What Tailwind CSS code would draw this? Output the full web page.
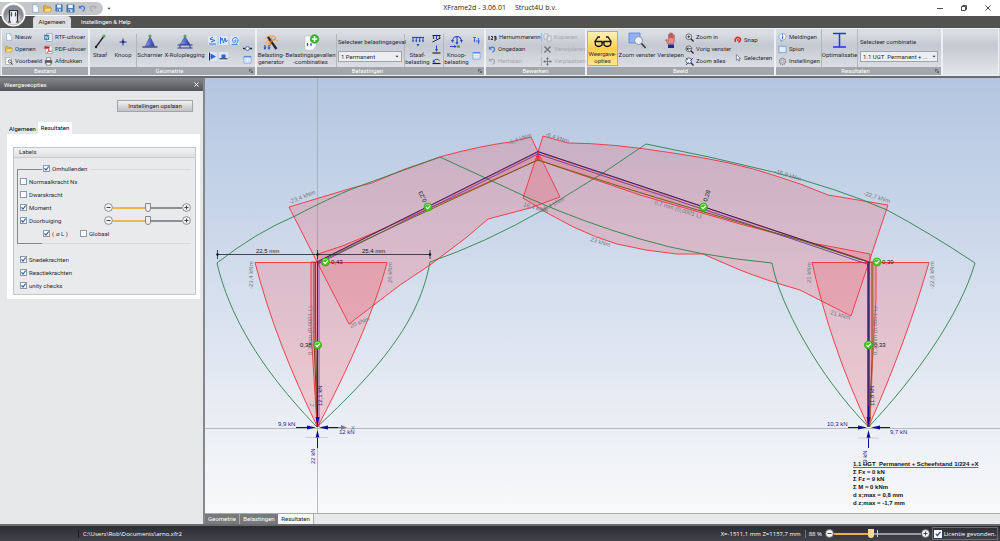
<!DOCTYPE html>
<html lang="nl">
<head>
    <meta charset="UTF-8">
    <meta name="viewport" content="width=device-width, initial-scale=1.0">
    <title>XFrame2d - 3.06.01</title>
    <script src="https://cdn.jsdelivr.net/npm/@tailwindcss/browser@4"></script>
</head>
<body class="flex flex-col h-screen overflow-hidden bg-[#5a5a5c] font-['Roboto','Noto_Sans',sans-serif] text-[6px] leading-[8px] text-[#2c2c34]">

    <!-- shared icons -->
    <svg class="hidden">
        <symbol id="page" viewBox="0 0 10 10"><path d="M2 .7h4.500l2 2v6.600H2z" fill="#fbfdff" stroke="#7a9cc8" stroke-width=".7"/><path d="M6.500.7v2h2" fill="#cfe0f4" stroke="#7a9cc8" stroke-width=".6"/></symbol>
        <symbol id="folder" viewBox="0 0 10 10"><path d="M.6 8.800V2h3l1 1.200h3.600V5" fill="#e8b93c" stroke="#b07f17" stroke-width=".6"/><path d="M.8 8.900L2.600 4.600h7L8 8.900z" fill="#ffdf7c" stroke="#b98a1c" stroke-width=".6"/></symbol>
        <symbol id="disk" viewBox="0 0 10 10"><path d="M1 1h8v8H1z" fill="#3f7fca" stroke="#23558f" stroke-width=".6"/><path d="M2.500 1h5v3.500h-5z" fill="#eef5fc"/><path d="M2.800 6h4.400v3H2.800z" fill="#c8dbe9"/><path d="M3.500 6.600h1.200v2H3.500z" fill="#2b4f78"/></symbol>
        <symbol id="undo" viewBox="0 0 10 10"><path d="M2.500 4.200C5 1.500 9 3 8 6.500 7.700 7.700 6.700 8.500 5.500 9" fill="none" stroke="currentColor" stroke-width="1.500"/><path d="M1 1.500v4.200h4.200z" fill="currentColor"/></symbol>
        <symbol id="grid" viewBox="0 0 10 10"><path d="M1 1.500h8v7.500H1z" fill="#f2f7fd" stroke="#6b9bd6" stroke-width=".8"/><path d="M1 2h8" stroke="#4f8ad6" stroke-width="1.600"/><path d="M3.700 3v6M6.400 3v6M1 5h8M1 7h8" stroke="#b9d1ee" stroke-width=".5"/></symbol>
        <symbol id="lens" viewBox="0 0 10 10"><circle cx="4.200" cy="4.200" r="3.200" fill="#eef4fb" stroke="#3a3f4c" stroke-width=".8"/><path d="M6.500 6.500l3 3" stroke="#2b2f3a" stroke-width="1.500"/></symbol>
        <symbol id="arrow" viewBox="0 0 4 3"><path d="M.5.7h3L2 2.500z" fill="#333"/></symbol>
        <symbol id="corner" viewBox="0 0 6 6"><path d="M.5 4.500v-4h4M2 2l3 3M5.300 2.600v2.700H2.600" fill="none" stroke="#333" stroke-width=".8"/></symbol>
        <symbol id="tick" viewBox="0 0 7 7"><path d="M1.500 3.300L3 5l2.700-3.500" fill="none" stroke="#2a5db0" stroke-width="1.200"/></symbol>
        <symbol id="minus" viewBox="0 0 9 9"><circle cx="4.500" cy="4.500" r="3.900" fill="#f4f4f5" stroke="#666" stroke-width=".7"/><path d="M2.500 4.500h4" stroke="#444" stroke-width="1"/></symbol>
        <symbol id="plus" viewBox="0 0 9 9"><circle cx="4.500" cy="4.500" r="3.900" fill="#f4f4f5" stroke="#666" stroke-width=".7"/><path d="M2.500 4.500h4M4.500 2.500v4" stroke="#444" stroke-width="1"/></symbol>
        <symbol id="ok" viewBox="0 0 10 10"><circle cx="5" cy="5" r="4.600" fill="#3fc51f" stroke="#2c9a14" stroke-width=".6"/><path d="M2 3.500a3.600 3.600 0 0 1 6 0" fill="none" stroke="#a5ec8c" stroke-width="1"/><path d="M2.800 5l1.800 1.900 2.900-3.300" fill="none" stroke="#fff" stroke-width="1.300"/></symbol>
    </svg>

    <!-- title bar -->
    <header class="relative flex h-4 shrink-0 items-center bg-white">
        <div class="flex h-[13px] items-center gap-[3px] rounded-r-full bg-[#c6c7ca] pl-[31px] pr-[6px]">
            <button aria-label="Nieuw"><svg class="size-[9px]"><use href="#page"/></svg></button>
            <button aria-label="Openen"><svg class="size-[9px]"><use href="#folder"/></svg></button>
            <button aria-label="Opslaan"><svg class="size-[8px]"><use href="#disk"/></svg></button>
            <button aria-label="Opslaan als"><svg class="size-[9px]"><use href="#disk"/></svg></button>
            <button aria-label="Ongedaan" class="text-[#3f78d8]"><svg class="size-[8px]"><use href="#undo"/></svg></button>
            <button aria-label="Herhalen" class="text-[#a9abb0]"><svg class="size-[8px] -scale-x-100"><use href="#undo"/></svg></button>
        </div>
        <button aria-label="Werkbalk aanpassen" class="ml-1"><svg class="h-[3px] w-1"><use href="#arrow"/></svg></button>
        <h1 class="absolute inset-x-0 text-center font-['Open_Sans',sans-serif] text-[7px] leading-4 whitespace-pre text-[#222]">XFrame2d - 3.06.01     Struct4U b.v.</h1>
        <div class="relative ml-auto flex items-center gap-[18px] pr-[9px]">
            <button aria-label="Minimaliseren"><svg class="size-[6px]" viewBox="0 0 6 6"><path d="M0 3.500h6" stroke="#222" stroke-width=".8"/></svg></button>
            <button aria-label="Herstellen"><svg class="size-[6px]" viewBox="0 0 6 6"><path d="M.5 1.500h4v4h-4zM1.700 1.300V.5h3.800v3.800h-.8" fill="none" stroke="#222" stroke-width=".8"/></svg></button>
            <button aria-label="Sluiten"><svg class="size-[6px]" viewBox="0 0 6 6"><path d="M.5.5l5 5M5.500.5l-5 5" stroke="#222" stroke-width=".8"/></svg></button>
        </div>
        <button aria-label="Programmamenu" class="absolute top-[2px] left-[1px] z-10">
            <svg class="size-[25px]" viewBox="0 0 25 25"><defs><radialGradient id="orb" cx=".5" cy=".8"><stop offset="0" stop-color="#fff"/><stop offset=".6" stop-color="#c4c6ca"/><stop offset="1" stop-color="#8b8d93"/></radialGradient></defs><circle cx="12.500" cy="12.500" r="12" fill="#fff"/><circle cx="12.500" cy="13" r="10" fill="url(#orb)" stroke="#a0a2a7" stroke-width=".6"/><path d="M8.500 19.500V8.500h8v11" fill="#edf0f5" stroke="#28282e" stroke-width="1.200"/><path d="M10.500 10v3M14.500 10v3" stroke="#3348c0" stroke-width="1"/><path d="M9.500 12.500l1 2.500 1-2.500zM13.500 12.500l1 2.500 1-2.500z" fill="#3348c0"/><path d="M7 20h3M15 20h3" stroke="#222" stroke-width="1.100"/></svg>
        </button>
    </header>

    <nav class="flex h-3 shrink-0 items-end bg-[#525253] pl-[33px]">
        <button class="h-3 w-[38px] rounded-t-sm bg-[#dcdee2] text-[#222]">Algemeen</button>
        <button class="ml-[10px] h-3 text-white">Instellingen &amp; Help</button>
    </nav>

    <!-- ribbon -->
    <div class="flex h-[48px] shrink-0 gap-[2px] bg-[#d5d7dc] px-[2px] pt-[1px] pb-[1px] *:flex *:flex-col *:bg-linear-to-b *:from-[#d9dce2] *:from-10% *:via-[#c4c9d2] *:via-35% *:to-[#e3e6ea] *:shadow-[0_0_0_1px_#eff0f2]">

        <section class="w-[86px]">
            <div class="grid flex-1 grid-cols-[39px_1fr] items-center pt-[2px] pl-[3px]">
                <button class="flex items-center gap-[2px]"><svg class="size-[8px]"><use href="#page"/></svg>Nieuw</button>
                <button class="flex items-center gap-[2px]"><svg class="size-[9px]" viewBox="0 0 10 10"><path d="M3 .6h6v8.800H3z" fill="#fff" stroke="#5a84bd" stroke-width=".6"/><path d="M5 3h3M5 5h3M5 7h3" stroke="#89a7d0" stroke-width=".6"/><path d="M.3 2h5.400v5.500H.3z" fill="#2e66b5"/><path d="M1.200 3.300l.9 3 .9-2.700.9 2.700.9-3" fill="none" stroke="#fff" stroke-width=".7"/></svg>RTF-uitvoer</button>
                <button class="flex items-center gap-[2px]"><svg class="size-[8px]"><use href="#folder"/></svg>Openen</button>
                <button class="flex items-center gap-[2px]"><svg class="size-[9px]" viewBox="0 0 10 10"><path d="M2 .5h5l2 2v7H2z" fill="#fff" stroke="#888" stroke-width=".6"/><path d="M.4 1.500h5.800v2.600H.4z" fill="#c82020"/><path d="M3.500 8.500C5.500 6 5.500 5 5 4.500c-.6 1.500 1.500 2.800 3.300 2.700C6.500 6.500 5 7.400 3.500 8.500z" fill="none" stroke="#d02828" stroke-width=".8"/></svg>PDF-uitvoer</button>
                <button class="flex items-center gap-[2px]"><svg class="size-[8px]" viewBox="0 0 10 10"><path d="M1 .5h5l2 2v7H1z" fill="#fff" stroke="#777" stroke-width=".6"/><circle cx="6" cy="5.500" r="2" fill="#dfeaf5" stroke="#333" stroke-width=".8"/><path d="M7.300 7L9.500 9.400" stroke="#222" stroke-width="1.200"/></svg>Voorbeeld</button>
                <button class="flex items-center gap-[2px]"><svg class="size-[9px]" viewBox="0 0 10 10"><path d="M2.800.8h4.400v3H2.800z" fill="#fff" stroke="#555" stroke-width=".6"/><path d="M1 3.600h8v3.600H1z" fill="#55585f"/><path d="M2.500 6h5v3h-5z" fill="#fff" stroke="#444" stroke-width=".6"/></svg>Afdrukken</button>
            </div>
            <h2 class="h-[8px] bg-[#a3a6aa] text-center leading-[8px] text-white">Bestand</h2>
        </section>

        <section class="w-[165px]">
            <div class="flex flex-1 pt-[5px]">
                <button class="flex w-5 flex-col items-center gap-[2px]"><svg class="h-[15px] w-3" viewBox="0 0 12 15"><path d="M2 13L10 2" stroke="#222" stroke-width="1.300"/><circle cx="2" cy="13" r="1.200" fill="#222"/><circle cx="10" cy="2" r="1.500" fill="#4fa64f"/></svg>Staaf</button>
                <button class="flex w-[26px] flex-col items-center gap-[2px]"><svg class="h-[15px] w-3" viewBox="0 0 12 15"><path d="M6 4.500v7M2.500 8h7" stroke="#3434b4" stroke-width="1"/><circle cx="6" cy="8" r="1.400" fill="#28287e"/></svg>Knoop</button>
                <button class="flex w-[27px] flex-col items-center gap-[2px] border-l border-[#b1b5bc]"><svg class="h-[15px] w-[18px]" viewBox="0 0 18 15"><defs><linearGradient id="tri"><stop offset="0" stop-color="#8fa4f0"/><stop offset="1" stop-color="#2634a0"/></linearGradient></defs><path d="M9 2.500L13.500 12h-9z" fill="url(#tri)" stroke="#2b349a" stroke-width=".5"/><path d="M1.500 13h15" stroke="#2b2b68" stroke-width="1.200"/><circle cx="9" cy="2" r="1.600" fill="#57a857"/></svg>Scharnier</button>
                <button class="flex w-[43px] flex-col items-center gap-[2px]"><svg class="h-[15px] w-[18px]" viewBox="0 0 18 15"><path d="M9 2.500L14 10.500H4z" fill="url(#tri)" stroke="#2b349a" stroke-width=".5"/><path d="M1.500 11h15M1.500 14h15M4 11v3M14 11v3" stroke="#2b3494" stroke-width="1"/><circle cx="9" cy="2" r="1.600" fill="#57a857"/></svg>X-Roloplegging</button>
                <div class="grid grid-cols-3 content-start gap-x-[2px] gap-y-[7px] pt-[2px] pl-[2px]">
                    <button aria-label="Veer x" class="bg-[#dce6f5]"><svg class="size-[9px]" viewBox="0 0 9 9"><path d="M5 1L2 3l5 1.500L3 6M1 8h7" fill="none" stroke="#2a6be0" stroke-width="1"/></svg></button>
                    <button aria-label="Veer z" class="bg-[#dce6f5]"><svg class="size-[9px]" viewBox="0 0 9 9"><path d="M1.500 1v7M1.500 5L3 2l1.500 5L6 2l1 4 1.500-2" fill="none" stroke="#2a6be0" stroke-width=".9"/></svg></button>
                    <button aria-label="Rotatieveer" class="bg-[#dce6f5]"><svg class="size-[9px]" viewBox="0 0 9 9"><path d="M4.500 4.500c1-1.500 2 .2 1 1.300s-3 .5-3-1.600 2.800-3.600 4.500-2 1 4-.5 5.300M1.500 8.300h6" fill="none" stroke="#2a6be0" stroke-width=".9"/></svg></button>
                    <button aria-label="Inklemming" class="bg-[#dce6f5]"><svg class="size-[9px]" viewBox="0 0 9 9"><path d="M1.500.5v8" stroke="#222"/><path d="M2.500 1.500L8 4.500 2.500 7.500z" fill="#2563d8"/></svg></button>
                    <button aria-label="Oplegging" class="bg-[#dce6f5]"><svg class="size-[9px]" viewBox="0 0 9 9"><path d="M2.500 2.500h4v3.500h-4z" fill="#2563d8"/><path d="M.5 6.800h8" stroke="#222"/></svg></button>
                </div>
                <div class="ml-auto flex flex-col justify-end gap-[2px] pr-[3px] pb-[3px]">
                    <button aria-label="Staafscharnier"><svg class="size-[9px]" viewBox="0 0 9 9"><path d="M0 4.500h2.500M6.500 4.500H9" stroke="#222" stroke-width="1.300"/><circle cx="4.500" cy="4.500" r="2" fill="#eef" stroke="#3f5fd6" stroke-width=".9"/></svg></button>
                    <button aria-label="Geometrietabel"><svg class="size-[9px]"><use href="#grid"/></svg></button>
                </div>
            </div>
            <h2 class="flex h-[8px] items-center bg-[#a3a6aa] leading-[8px] text-white"><span class="flex-1 text-center">Geometrie</span><svg class="mr-[2px] size-1"><use href="#corner"/></svg></h2>
        </section>

        <section class="w-[227px]">
            <div class="flex flex-1 pt-[5px] leading-[7px]">
                <button class="flex w-[28px] flex-col items-center"><svg class="h-[17px] w-[18px]" viewBox="0 0 18 17"><path d="M3 5c3-4 9-4 11-1M4 9c1-3 8-5 12-2" fill="none" stroke="#f0a44e" stroke-width="1.100"/><path d="M6 3l8.500 12" stroke="#2c2521" stroke-width="2.200"/><path d="M10 3l-2 9M14 4l-8 6" stroke="#e48025" stroke-width=".9"/><path d="M3 11v3M7 11v3" stroke="#2d46c0" stroke-width="1.200"/><path d="M1.500 13.500L3 16l1.500-2.500zM5.500 13.500L7 16l1.500-2.500z" fill="#2d46c0"/></svg><span>Belasting-<br>generator</span></button>
                <button class="flex w-[51px] flex-col items-center"><svg class="h-[17px] w-[18px]" viewBox="0 0 18 17"><path d="M3 2h11v10l-3 4H3z" fill="#fafbfd" stroke="#b9bfc9" stroke-width=".6"/><path d="M5.500 9v2M9 9v2" stroke="#2d46c0"/><path d="M4.500 10.500l1 2 1-2zM8 10.500l1 2 1-2z" fill="#2d46c0"/><circle cx="12.500" cy="5" r="4.300" fill="#35b529" stroke="#1c8a17" stroke-width=".5"/><path d="M12.500 2.300v5.400M9.800 5h5.400" stroke="#fff" stroke-width="1.600"/></svg><span>Belastingsgevallen<br>-combinaties</span></button>
                <div class="flex w-[69px] flex-col gap-[6px] border-x border-[#b1b5bc] pt-[4px] pl-px">
                    <label for="geval" class="whitespace-nowrap">Selecteer belastingsgeval</label>
                    <div class="grid items-center">
                        <select id="geval" class="col-start-1 row-start-1 h-[11px] w-[64px] appearance-none border border-[#a0a4ab] bg-[#eceef1] pl-[2px] text-[6px] leading-[8px]"><option>1 Permanent</option></select>
                        <svg class="pointer-events-none col-start-1 row-start-1 ml-[57px] h-[3px] w-1"><use href="#arrow"/></svg>
                    </div>
                </div>
                <button class="flex w-[25px] flex-col items-center"><svg class="h-[17px] w-[14px]" viewBox="0 0 14 17"><path d="M1 3.500h12" stroke="#2d46c0" stroke-width="1.200"/><path d="M2 4v3M5.300 4v3M8.700 4v3M12 4v3" stroke="#2d46c0" stroke-width="1"/><path d="M.8 6.500L2 8.500l1.200-2zM4 6.500l1.300 2 1.200-2zM7.500 6.500l1.200 2 1.200-2zM10.800 6.500l1.200 2 1.200-2zM5.500 10h3L7 12.500z" fill="#2d46c0"/></svg><span>Staaf-<br>belasting</span></button>
                <div class="flex w-[14px] flex-col items-center gap-[2px] border-r border-[#b1b5bc]">
                    <button aria-label="Schuine last"><svg class="size-[9px]" viewBox="0 0 9 9"><path d="M.5 1.500h8M.5 8l8-4" stroke="#222" stroke-width="1"/><path d="M1.500 2v3M4.500 2v3M7.500 2v2" stroke="#2d46c0" stroke-width="1.200"/></svg></button>
                    <button aria-label="Puntlast"><svg class="size-[9px]" viewBox="0 0 9 9"><path d="M.5 8h8" stroke="#222" stroke-width="1.200"/><path d="M4.500.5v4" stroke="#2d46c0"/><path d="M3 4l1.500 3L6 4z" fill="#2d46c0"/></svg></button>
                    <button aria-label="Momentlast"><svg class="size-[9px]" viewBox="0 0 9 9"><path d="M.5 7.500h8" stroke="#222" stroke-width="1.200"/><path d="M2 5a3 3 0 0 1 5.500 0" fill="none" stroke="#2d46c0" stroke-width="1"/><path d="M.8 3.500v3h3z" fill="#2d46c0"/></svg></button>
                </div>
                <button class="flex w-[25px] flex-col items-center"><svg class="h-[17px] w-[16px]" viewBox="0 0 16 17"><path d="M3.500 7a4.500 4.500 0 0 1 9 0M8 3v6M1 12.500h5" fill="none" stroke="#2d46c0" stroke-width="1.100"/><path d="M2 6h3L3.500 9zM11 6h3l-1.500 3zM6.500 8h3L8 11zM5 11l3 1.500L5 14z" fill="#2d46c0"/><circle cx="9.500" cy="12.500" r="1.500" fill="#43a843"/></svg><span>Knoop-<br>belasting</span></button>
                <div class="flex flex-1 flex-col items-center gap-[6px] pt-[2px]">
                    <button aria-label="Knooplasten"><svg class="size-[9px]" viewBox="0 0 9 9"><path d="M1 1.500h3M2.500 1.500v4M4 5h4M6.500 2v5" stroke="#2d6bc0" stroke-width=".9"/><path d="M1.500 4.500h2l-1 2zM5.500 6h2l-1 2.500z" fill="#2d6bc0"/></svg></button>
                    <button aria-label="Lastentabel"><svg class="size-[9px]"><use href="#grid"/></svg></button>
                </div>
            </div>
            <h2 class="flex h-[8px] items-center bg-[#a3a6aa] leading-[8px] text-white"><span class="flex-1 text-center">Belastingen</span><svg class="mr-[2px] size-1"><use href="#corner"/></svg></h2>
        </section>

        <section class="w-[99px]">
            <div class="grid flex-1 grid-cols-[53px_1fr] items-center pt-[2px] pl-[2px]">
                <button class="flex items-center gap-[2px] whitespace-nowrap"><svg class="size-[9px]" viewBox="0 0 9 9"><path d="M1 3v4M3 3.500h1.500v1.500L3 6.500h2M6 3.500h2V5H6.500 8v2H6" fill="none" stroke="#222" stroke-width=".9"/></svg>Hernummerenn</button>
                <button disabled class="flex items-center gap-[2px] border-l border-[#b1b5bc] pl-px text-[#a6a9ae]"><svg class="size-[9px]" viewBox="0 0 9 9"><path d="M1 1h4v5H1zM4 3h4v5H4z" fill="#e7e9ec" stroke="currentColor" stroke-width=".7"/></svg>Kopieren</button>
                <button class="flex items-center gap-[2px]"><svg class="size-[8px] text-[#3f78d8]"><use href="#undo"/></svg>Ongedaan</button>
                <button disabled class="flex items-center gap-[2px] border-l border-[#b1b5bc] pl-px text-[#a6a9ae]"><svg class="size-[9px] text-[#6f7378]" viewBox="0 0 9 9"><path d="M1.500 1.500l6 6M7.500 1.500l-6 6" stroke="currentColor" stroke-width="1.400"/></svg>Verwijderen</button>
                <button disabled class="flex items-center gap-[2px] text-[#a6a9ae]"><svg class="size-[8px]"><use href="#undo"/></svg>Herhalen</button>
                <button disabled class="flex items-center gap-[2px] border-l border-[#b1b5bc] pl-px text-[#a6a9ae]"><svg class="size-[9px] text-[#6f7378]" viewBox="0 0 9 9"><path d="M4.500 1v7M1 4.500h7" stroke="currentColor" stroke-width=".8"/><path d="M3 2.300L4.500 0 6 2.300zM3 6.700L4.500 9 6 6.700zM2.300 3L0 4.500 2.300 6zM6.700 3L9 4.500 6.700 6z" fill="currentColor"/></svg>Verplaatsen</button>
            </div>
            <h2 class="h-[8px] bg-[#a3a6aa] text-center leading-[8px] text-white">Bewerken</h2>
        </section>

        <section class="w-[187px]">
            <div class="flex flex-1">
                <button class="mt-[2px] mb-px flex w-[31px] flex-col items-center border border-[#d9ab3d] bg-linear-to-b from-[#fff0b8] via-[#ffcf4b] to-[#ffe88e] leading-[7px]"><svg class="h-[18px] w-[18px]" viewBox="0 0 18 18"><path d="M1 9.500h7v3.500q-3.500 3-6.500 0zM10 9.500h7l-.5 3.500q-3.500 3-6.500 0zM8 10.500h2M1 9.500L4 5h2M17 9.500L14 5h-2" fill="none" stroke="#141414" stroke-width="1.300"/></svg><span>Weergave-<br>opties</span></button>
                <button class="flex w-[38px] flex-col items-center gap-[2px] whitespace-nowrap pt-[2px]"><svg class="h-[18px] w-[18px]" viewBox="0 0 18 18"><path d="M1 2h11v10H1z" fill="#8fb3f5" stroke="#5a84d6" stroke-width=".8"/><circle cx="10.500" cy="9.500" r="4" fill="#e6effb" stroke="#8b919c" stroke-width="1"/><path d="M13.500 12.500l4 4.500" stroke="#3c4049" stroke-width="1.800"/></svg>Zoom venster</button>
                <button class="flex w-[29px] flex-col items-center gap-[2px] pt-[2px]"><svg class="h-[18px] w-[14px]" viewBox="0 0 14 18"><path d="M4 13L1.500 9l1-.7L4.500 10V3.500h1.300V7 2h1.500v5-4.500h1.500V7.500 4h1.500v6l-1 3z" fill="#e58e86" stroke="#a34741" stroke-width=".6"/><path d="M4 13.500h6V17H4z" fill="#1d2b90"/></svg>Verslepen</button>
                <div class="flex w-[49px] flex-col justify-around pt-[2px]">
                    <button class="flex items-center gap-[2px]"><svg class="size-[9px]" viewBox="0 0 10 10"><use href="#lens"/><path d="M2.500 4.200h3.400M4.200 2.500v3.400" stroke="#222" stroke-width=".9"/></svg>Zoom in</button>
                    <button class="flex items-center gap-[2px] whitespace-nowrap"><svg class="size-[9px]" viewBox="0 0 10 10"><use href="#lens"/><path d="M2 4.200h5M4 2.500L2 4.200 4 6" fill="none" stroke="#222" stroke-width=".9"/></svg>Vorig venster</button>
                    <button class="flex items-center gap-[2px]"><svg class="size-[9px]" viewBox="0 0 10 10"><use href="#lens"/><path d="M1 9l3-3M9 1L6 4M1 1l2 2" stroke="#2558a8" stroke-width="1.100"/></svg>Zoom alles</button>
                </div>
                <div class="flex flex-1 flex-col justify-around pt-[2px]">
                    <button class="flex items-center gap-[2px]"><svg class="size-[8px]" viewBox="0 0 10 10"><path d="M2 7.500C0 3 4 .5 7 2.500c2 1.500 1 4.500-1.500 5.500" fill="none" stroke="#d42f2b" stroke-width="2"/><circle cx="4.800" cy="5" r="1.300" fill="#d42f2b"/></svg>Snap</button>
                    <button class="flex items-center gap-[2px]"><svg class="size-[8px]" viewBox="0 0 10 10"><path d="M3 .8v7l1.800-1.600L6 9l1.200-.5L6 5.800h2.300z" fill="#fff" stroke="#555c70" stroke-width=".8"/></svg>Selecteren</button>
                </div>
            </div>
            <h2 class="h-[8px] bg-[#a3a6aa] text-center leading-[8px] text-white">Beeld</h2>
        </section>

        <section class="w-[165px]">
            <div class="flex flex-1">
                <div class="flex w-[46px] flex-col justify-around border-r border-[#b1b5bc] pt-[2px] pl-[2px]">
                    <button class="flex items-center gap-[2px]"><svg class="size-[9px]" viewBox="0 0 10 10"><path d="M5 .6a4 3.600 0 1 1-1 7.100L3.500 9.500 2.500 7A4 3.600 0 0 1 5 .6z" fill="#f4f8ff" stroke="#5d92d6" stroke-width=".8"/><path d="M5 1.800v1M5 3.500v3" stroke="#1d52b8" stroke-width="1.300"/></svg>Meldingen</button>
                    <button class="flex items-center gap-[2px]"><svg class="size-[9px]" viewBox="0 0 10 10"><path d="M1 1.500h8v7H1z" fill="#e3edfa" stroke="#6b9bd6" stroke-width=".9"/></svg>Spion</button>
                    <button class="flex items-center gap-[2px]"><svg class="size-[9px]" viewBox="0 0 10 10"><circle cx="5" cy="5" r="3.500" fill="#c4c7cc" stroke="#85888e" stroke-width="1.300" stroke-dasharray="1.500 .8"/><circle cx="5" cy="5" r="1.300" fill="#eceef1" stroke="#85888e" stroke-width=".6"/></svg>Instellingen</button>
                </div>
                <button class="flex w-[36px] flex-col items-center gap-[2px] border-r border-[#b1b5bc] pt-[2px]"><svg class="h-[18px] w-[15px]" viewBox="0 0 15 18"><path d="M1 2.500h13M1 16h13M7.500 2.500V16" stroke="#2338dc" stroke-width="1.500"/></svg>Optimalisatie</button>
                <div class="flex flex-col gap-[6px] pt-[9px] pl-[2px] leading-[7px]">
                    <label for="combi" class="whitespace-nowrap">Selecteer combinatie</label>
                    <div class="grid items-center">
                        <select id="combi" class="col-start-1 row-start-1 h-[11px] w-[78px] appearance-none border border-[#a0a4ab] bg-[#eceef1] pl-[2px] text-[6px] leading-[8px]"><option>1.1 UGT&nbsp; Permanent + ...</option></select>
                        <svg class="pointer-events-none col-start-1 row-start-1 ml-[72px] h-[3px] w-1"><use href="#arrow"/></svg>
                    </div>
                </div>
            </div>
            <h2 class="flex h-[8px] items-center bg-[#a3a6aa] leading-[8px] text-white"><span class="flex-1 text-center">Resultaten</span><svg class="mr-[2px] size-1"><use href="#corner"/></svg></h2>
        </section>

        <div class="flex-1"></div>
    </div>

    <!-- work area -->
    <main class="flex min-h-0 flex-1 gap-[2px] border-y-2 border-[#6a6b6e] bg-[#85878b]">

        <aside class="w-[203px] shrink-0 bg-[#e6e7e8]">
            <div class="flex h-[13px] items-center justify-between bg-linear-to-b from-[#85868a] to-[#55565a] px-1 text-white">
                <h2>Weergaveopties</h2>
                <button aria-label="Paneel sluiten"><svg class="size-[5px]" viewBox="0 0 5 5"><path d="M.5.5l4 4M4.500.5l-4 4" stroke="#fff"/></svg></button>
            </div>
            <div class="flex justify-end pt-[9px] pr-[10px]">
                <button class="h-3 w-[76px] border border-[#a2a4a8] bg-linear-to-b from-[#f5f5f6] via-[#d6d8db] to-[#c0c2c6] text-[#222]">Instellingen opslaan</button>
            </div>
            <div class="mt-[10px] flex items-end pl-[7px] text-black">
                <button class="h-[11px] w-[31px]">Algemeen</button>
                <button class="h-[12px] w-[34px] bg-white">Resultaten</button>
            </div>
            <div class="mr-[3px] ml-[7px] bg-white pt-[13px] pr-1 pb-1 pl-[6px]">
                <section class="border border-[#c3c5c8] bg-[#e9eaeb] pr-1 pb-[2px] pl-[3px]">
                    <h3 class="-mr-1 -ml-[3px] h-[10px] border-b border-[#c9cbce] bg-linear-to-b from-[#f2f3f4] to-[#dfe0e2] pl-[5px]">Labels</h3>
                    <div class="grid grid-cols-[25px_1fr] grid-rows-[10px_75px_3px]">
                        <div class="col-start-1 row-start-2 mt-px -mb-px border-y border-l border-[#85878b]"></div>
                        <div class="col-start-2 row-start-2 mt-px -mb-px border-y border-[#d6d8da]"></div>
                        <div class="z-10 col-span-2 col-start-1 row-span-3 row-start-1 flex flex-col pt-[4px] *:h-[13px]">
                            <div class="flex items-center pl-[25px]">
                                <label class="flex items-center gap-[2px] bg-[#e9eaeb] pr-1 pl-px"><span class="grid"><input type="checkbox" checked class="peer col-start-1 row-start-1 size-[7px] appearance-none border border-[#8e97a5] bg-white"><svg class="pointer-events-none col-start-1 row-start-1 hidden size-[7px] peer-checked:block"><use href="#tick"/></svg></span>Omhullenden</label>
                            </div>
                            <div class="flex items-center pl-[3px]">
                                <label class="flex items-center gap-[2px]"><span class="grid"><input type="checkbox" class="peer col-start-1 row-start-1 size-[7px] appearance-none border border-[#8e97a5] bg-white"><svg class="pointer-events-none col-start-1 row-start-1 hidden size-[7px] peer-checked:block"><use href="#tick"/></svg></span>Normaalkracht Nx</label>
                            </div>
                            <div class="flex items-center pl-[3px]">
                                <label class="flex items-center gap-[2px]"><span class="grid"><input type="checkbox" class="peer col-start-1 row-start-1 size-[7px] appearance-none border border-[#8e97a5] bg-white"><svg class="pointer-events-none col-start-1 row-start-1 hidden size-[7px] peer-checked:block"><use href="#tick"/></svg></span>Dwarskracht</label>
                            </div>
                            <div class="flex items-center justify-between pl-[3px]">
                                <label class="flex items-center gap-[2px]"><span class="grid"><input type="checkbox" checked class="peer col-start-1 row-start-1 size-[7px] appearance-none border border-[#8e97a5] bg-white"><svg class="pointer-events-none col-start-1 row-start-1 hidden size-[7px] peer-checked:block"><use href="#tick"/></svg></span>Moment</label>
                                <div class="flex items-center">
                                    <button aria-label="Moment kleiner"><svg class="size-[9px]"><use href="#minus"/></svg></button>
                                    <input type="range" aria-label="Schaal moment" value="50" class="h-[9px] w-[69px] appearance-none bg-[linear-gradient(to_right,#f0b64e_50%,#8d9095_50%)] bg-[length:100%_2px] bg-center bg-no-repeat [&::-webkit-slider-thumb]:h-[9px] [&::-webkit-slider-thumb]:w-[6px] [&::-webkit-slider-thumb]:appearance-none [&::-webkit-slider-thumb]:rounded-b-full [&::-webkit-slider-thumb]:border [&::-webkit-slider-thumb]:border-[#85878b] [&::-webkit-slider-thumb]:bg-[#eeeeef]">
                                    <button aria-label="Moment groter"><svg class="size-[9px]"><use href="#plus"/></svg></button>
                                </div>
                            </div>
                            <div class="flex items-center justify-between pl-[3px]">
                                <label class="flex items-center gap-[2px]"><span class="grid"><input type="checkbox" checked class="peer col-start-1 row-start-1 size-[7px] appearance-none border border-[#8e97a5] bg-white"><svg class="pointer-events-none col-start-1 row-start-1 hidden size-[7px] peer-checked:block"><use href="#tick"/></svg></span>Doorbuiging</label>
                                <div class="flex items-center">
                                    <button aria-label="Doorbuiging kleiner"><svg class="size-[9px]"><use href="#minus"/></svg></button>
                                    <input type="range" aria-label="Schaal doorbuiging" value="50" class="h-[9px] w-[69px] appearance-none bg-[linear-gradient(to_right,#f0b64e_50%,#8d9095_50%)] bg-[length:100%_2px] bg-center bg-no-repeat [&::-webkit-slider-thumb]:h-[9px] [&::-webkit-slider-thumb]:w-[6px] [&::-webkit-slider-thumb]:appearance-none [&::-webkit-slider-thumb]:rounded-b-full [&::-webkit-slider-thumb]:border [&::-webkit-slider-thumb]:border-[#85878b] [&::-webkit-slider-thumb]:bg-[#eeeeef]">
                                    <button aria-label="Doorbuiging groter"><svg class="size-[9px]"><use href="#plus"/></svg></button>
                                </div>
                            </div>
                            <div class="grid grid-cols-[37px_1fr] items-center pl-[26px]">
                                <label class="flex items-center gap-[2px]"><span class="grid"><input type="checkbox" checked class="peer col-start-1 row-start-1 size-[7px] appearance-none border border-[#8e97a5] bg-white"><svg class="pointer-events-none col-start-1 row-start-1 hidden size-[7px] peer-checked:block"><use href="#tick"/></svg></span>( ⌀ L )</label>
                                <label class="flex items-center gap-[2px]"><span class="grid"><input type="checkbox" class="peer col-start-1 row-start-1 size-[7px] appearance-none border border-[#8e97a5] bg-white"><svg class="pointer-events-none col-start-1 row-start-1 hidden size-[7px] peer-checked:block"><use href="#tick"/></svg></span>Globaal</label>
                            </div>
                        </div>
                    </div>
                    <div class="flex flex-col pt-[7px] pl-[3px] *:h-[13px]">
                        <label class="flex items-center gap-[2px]"><span class="grid"><input type="checkbox" checked class="peer col-start-1 row-start-1 size-[7px] appearance-none border border-[#8e97a5] bg-white"><svg class="pointer-events-none col-start-1 row-start-1 hidden size-[7px] peer-checked:block"><use href="#tick"/></svg></span>Snedekrachten</label>
                        <label class="flex items-center gap-[2px]"><span class="grid"><input type="checkbox" checked class="peer col-start-1 row-start-1 size-[7px] appearance-none border border-[#8e97a5] bg-white"><svg class="pointer-events-none col-start-1 row-start-1 hidden size-[7px] peer-checked:block"><use href="#tick"/></svg></span>Reactiekrachten</label>
                        <label class="flex items-center gap-[2px]"><span class="grid"><input type="checkbox" checked class="peer col-start-1 row-start-1 size-[7px] appearance-none border border-[#8e97a5] bg-white"><svg class="pointer-events-none col-start-1 row-start-1 hidden size-[7px] peer-checked:block"><use href="#tick"/></svg></span>unity checks</label>
                    </div>
                </section>
            </div>
        </aside>

        <div class="flex min-w-0 flex-1 flex-col bg-[#e9e9ea]">
            <!-- frame drawing -->
            <svg class="min-h-0 w-full flex-1 bg-linear-to-b from-[#b3c6e1] to-[#f9f9fa] font-['Liberation_Sans',Arial,sans-serif] text-[6px]" viewBox="205 78 795 435">
                <path d="M317.500 78V514M205 428.500H1000" stroke="#9da3ab" stroke-width=".7"/>

                <!-- moment envelopes -->
                <g fill="#ff3c46" fill-opacity=".2" stroke="#f0323c" stroke-width=".9">
                    <path d="M289 207L352 188 372 183 405 169 443 156Q480 146 510 142L531 137 538 152 560 197 530 208 488 219 467 237 430 265 400 285 349 324 317 262z"/>
                    <path d="M538 152L543 136 568 143Q610 143 673 153 735 162 773 175 800 183 828 195L888 205 869 262 851 316 800 290Q765 280 740 270L703 254 677 254Q645 251 617 244 575 232 523 198z"/>
                    <path d="M255 262.500H387C375 310 345 375 317.500 427 290 370 270 320 255 262.500z"/>
                    <path d="M812 262.500H929C915 312 893 372 868.500 427 842 370 825 320 812 262.500z"/>
                    <path d="M318 254L345 245 378 231 455 197 538 160 538 152 317 262z"/>
                    <path d="M538 152V160L640 195 740 224 812 243 870 254V262z"/>
                    <path d="M311 262V330L317 427 317.500 262zM876 262V300L873 350 868.500 427V262z"/>
                </g>
                <path d="M538 152l-3 9h6z" fill="#ff2a36" fill-opacity=".6"/>

                <!-- displacement envelopes -->
                <g fill="none" stroke="#2f8048" stroke-width=".9">
                    <path d="M217 263C225 297 245 353 317 427"/>
                    <path d="M217 263Q255 233 295 216C320 203 345 191 368 183L440 157 533 200Q583 222 640 239T772 263C780 305 818 375 868.500 427 915 378 960 315 975 263Q930 233 887 210 837 188 773 172T646 144L603 173 543 210Q485 243 430 262C421 310 395 355 317 427"/>
                </g>

                <!-- members -->
                <g fill="none" stroke-width="1">
                    <path d="M317 262L538 151.500 868.500 262" stroke="#28286e"/>
                    <path d="M318 264L538 154 868.500 264.500" stroke="#6a3a9c" stroke-width=".9"/>
                    <path d="M317 263Q400 223 538 160 640 194 800 240L868 262" stroke="#66661c"/>
                    <path d="M315.500 262V330L317.500 427" stroke="#5b5b22"/>
                    <path d="M314 262V340L317.500 427" stroke="#7d4020"/>
                    <path d="M317.500 262V427" stroke="#2d2d6e"/>
                    <path d="M319 262V427" stroke="#7030b0" stroke-width=".8"/>
                    <path d="M868.500 262V427" stroke="#46296e" stroke-width="2.500"/>
                    <path d="M872 262V360L869.500 427" stroke="#58581f"/>
                    <path d="M873 262V350L870 427" stroke="#b86428" stroke-width=".8"/>
                </g>

                <!-- dimension line -->
                <path d="M217 254.500H430M217.500 250V259M317.500 250V259M430 250V259" fill="none" stroke="#1d1f30" stroke-width=".8"/>
                <g fill="#111"><circle cx="217.500" cy="254.500" r="1.200"/><circle cx="317.500" cy="254.500" r="1.200"/><circle cx="430" cy="254.500" r="1.200"/></g>

                <!-- reactions -->
                <g stroke="#0c0c9c" fill="#0c0c9c" stroke-width="1">
                    <path d="M296 427.500h13M326 427.500h12M317.500 437v11M317.500 405v13"/>
                    <path d="M307 425.500l9 2-9 2zM328 425.500l-9 2 9 2zM315.500 438l2-8 2 8zM315.500 417l2 8 2-8z" stroke="none"/>
                    <path d="M848 427.500h12M878 427.500h12M868.500 437v11M868.500 406v12"/>
                    <path d="M858 425.500l9 2-9 2zM880 425.500l-9 2 9 2zM866.500 438l2-8 2 8zM866.500 417l2 8 2-8z" stroke="none"/>
                </g>
                <path d="M306 437.500h22M858 438h21" stroke="#b9bcc2" stroke-width=".6"/>
                <path d="M338 427.500h4" stroke="#777"/><path d="M341 425l6 2.500-6 2.500z" fill="#7c7f77"/>

                <g fill="#74767d">
                    <text transform="translate(290 204) rotate(-22)">-23,4 kNm</text>
                    <text transform="translate(509 145) rotate(-20)">-6,4 kNm</text>
                    <text transform="translate(545 136) rotate(17)">-6,4 kNm</text>
                    <text transform="translate(774 173) rotate(17)">-16,9 kNm</text>
                    <text transform="translate(863 195) rotate(17)">-22,7 kNm</text>
                    <text transform="translate(590 241) rotate(17)">23 kNm</text>
                    <text transform="translate(523 206) rotate(17)">16,4 kNm</text>
                    <text transform="translate(542 212) rotate(-27)">16,4 kNm</text>
                    <text transform="translate(654 204) rotate(17)">0,7 mm (0,0001 L)</text>
                    <text transform="translate(351 328) rotate(-22)">20 kNm</text>
                    <text transform="translate(830 314) rotate(17)">21 kNm</text>
                    <text transform="translate(253 289) rotate(-90)">-23,4 kNm</text>
                    <text transform="translate(392 283) rotate(-90)">26 kNm</text>
                    <text transform="translate(811 283) rotate(-90)">21 kNm</text>
                    <text transform="translate(934 289) rotate(-90)">-22,6 kNm</text>
                    <text transform="translate(312 355) rotate(-90)">0,3 mm (0,0001 L)</text>
                    <text transform="translate(877 355) rotate(-90)">0,3 mm (0,0001 L)</text>
                    <text transform="translate(314 407) rotate(-90)">Z</text>
                    <text x="351" y="430">X</text>
                </g>
                <g fill="#16161c">
                    <text x="256" y="252.500">22,5 mm</text>
                    <text x="362" y="252.500">25,4 mm</text>
                    <text x="331" y="264">0,43</text>
                    <text x="300" y="347">0,38</text>
                    <text x="882" y="264">0,39</text>
                    <text x="874" y="347">0,33</text>
                    <text transform="translate(427 201) rotate(-117)">0,23</text>
                    <text transform="translate(707 202) rotate(-73)">0,28</text>
                </g>
                <g fill="#1c1c90">
                    <text x="278" y="426">9,9 kN</text>
                    <text x="339" y="434">12 kN</text>
                    <text x="827" y="426">10,3 kN</text>
                    <text x="890" y="434">9,7 kN</text>
                    <text transform="translate(322 406) rotate(-90)">12,1 kN</text>
                    <text transform="translate(315 464) rotate(-90)">22 kN</text>
                    <text transform="translate(874 406) rotate(-90)">11,8 kN</text>
                    <text transform="translate(867 466) rotate(-90)">19 kN</text>
                </g>
                <use href="#ok" x="321" y="257.500" width="9" height="9"/>
                <use href="#ok" x="313" y="340.500" width="9" height="9"/>
                <use href="#ok" x="423.500" y="202.500" width="9" height="9"/>
                <use href="#ok" x="699" y="202.500" width="9" height="9"/>
                <use href="#ok" x="872.500" y="257.500" width="9" height="9"/>
                <use href="#ok" x="864" y="340.500" width="9" height="9"/>

                <g fill="#111" class="font-bold">
                    <text x="853" y="466" class="underline" xml:space="preserve">1.1 UGT  Permanent + Scheefstand 1/224 +X</text>
                    <text x="853" y="474">Σ Fx = 0 kN</text>
                    <text x="853" y="481">Σ Fz = 9 kN</text>
                    <text x="853" y="489">Σ M = 0 kNm</text>
                    <text x="853" y="497">d x;max = 0,8 mm</text>
                    <text x="853" y="505">d z;max = -1,7 mm</text>
                </g>
            </svg>
            <div class="flex h-[11px] shrink-0 items-stretch border-t border-[#a9abae]">
                <button class="w-[35px] border-r border-[#a9abae] bg-[#77797d] text-white">Geometrie</button>
                <button class="w-[38px] bg-[#77797d] text-white">Belastingen</button>
                <button class="w-[36px] border-r border-[#a9abae] bg-[#f6f6f7] text-[#222]">Resultaten</button>
            </div>
        </div>
    </main>

    <!-- status bar -->
    <footer class="flex h-[15px] shrink-0 items-center bg-linear-to-b from-[#2c2d33] to-[#41424a] pr-[2px] font-['Open_Sans',sans-serif] text-white">
        <span class="ml-[78px] border-l border-[#1a1b1f] pl-1">C:\Users\Rob\Documents\arno.xfr2</span>
        <span class="ml-auto border-r border-[#777] pr-1">X=-1511,1 mm Z=1157,7 mm</span>
        <span class="w-[19px] pl-[3px] whitespace-nowrap">88 %</span>
        <button aria-label="Uitzoomen"><svg class="size-[9px]"><use href="#minus"/></svg></button>
        <input type="range" aria-label="Zoom" value="43" class="h-[10px] w-[87px] appearance-none bg-[linear-gradient(#cfd0d4,#cfd0d4),linear-gradient(to_right,#e9b04a_43%,#9a9ca1_43%)] bg-[length:1px_7px,100%_2px] bg-center bg-no-repeat [&::-webkit-slider-thumb]:h-[9px] [&::-webkit-slider-thumb]:w-[6px] [&::-webkit-slider-thumb]:appearance-none [&::-webkit-slider-thumb]:rounded-b-full [&::-webkit-slider-thumb]:bg-[#ffd98a]">
        <button aria-label="Inzoomen"><svg class="size-[9px]"><use href="#plus"/></svg></button>
        <label class="ml-[2px] flex h-[13px] items-center gap-[2px] border border-[#6b6c72] px-px"><span class="grid"><input type="checkbox" checked class="peer col-start-1 row-start-1 size-2 appearance-none bg-white"><svg class="pointer-events-none col-start-1 row-start-1 hidden size-2 peer-checked:block"><use href="#tick"/></svg></span>Licentie gevonden.</label>
    </footer>
</body>
</html>
